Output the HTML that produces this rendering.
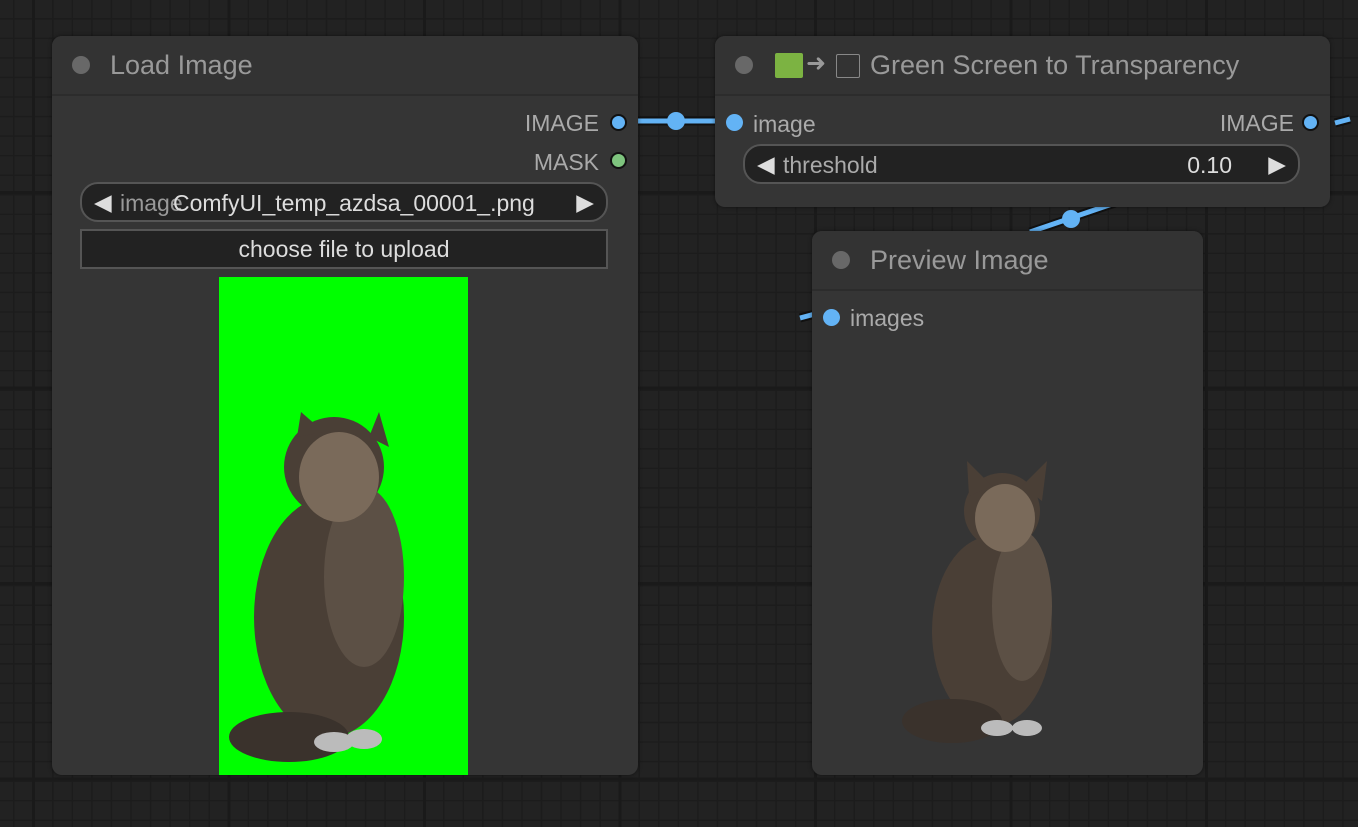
<!DOCTYPE html>
<html><head><style>
body{margin:0;width:1358px;height:827px;overflow:hidden;background:#222;font-family:"Liberation Sans",sans-serif;position:relative}
.grid{position:absolute;inset:0;
background-image:
linear-gradient(90deg,#1a1a1a 3px,transparent 3px),
linear-gradient(0deg,#1a1a1a 3px,transparent 3px),
linear-gradient(90deg,#1c1c1c 1.5px,transparent 1.5px),
linear-gradient(0deg,#1c1c1c 1.5px,transparent 1.5px);
background-size:195.5px 195.5px,195.5px 195.5px,19.55px 19.55px,19.55px 19.55px;
background-position:32px 0,0 194px,13px 0,0 0px}
.node{position:absolute;background:#353535;border-radius:10px;box-shadow:0 0 4px rgba(0,0,0,.5)}
.hd{height:58px;border-bottom:2px solid #2c2c2c;background:#333;border-radius:10px 10px 0 0;position:relative}
.dot{position:absolute;width:18px;height:18px;border-radius:50%;background:#686868;top:20px;left:20px}
.title{position:absolute;left:58px;top:14px;font-size:27px;color:#999}
.t{position:absolute;color:#aaa;font-size:23px}
.sock{position:absolute;width:13px;height:13px;border-radius:50%;background:#63b3f5;border:2px solid #111}
.widget{position:absolute;border:2px solid #555;background:#222;border-radius:18px;color:#ddd;font-size:23px}
</style></head><body>
<div class="grid"></div>
<svg width="1358" height="827" style="position:absolute;left:0;top:0">
<path d="M630 121 L720 121" stroke="#111" stroke-width="9"/>
<path d="M630 121 L720 121" stroke="#63b3f5" stroke-width="5"/>
<circle cx="676" cy="121" r="9" fill="#63b3f5"/>
<path d="M1335 123 L1350 119" stroke="#111" stroke-width="9"/><path d="M1335 123 L1350 119" stroke="#63b3f5" stroke-width="5"/>
<path d="M1030 232 L1115 203" stroke="#111" stroke-width="9"/><path d="M1030 232 L1115 203" stroke="#63b3f5" stroke-width="5"/>
<circle cx="1071" cy="219" r="9" fill="#63b3f5"/>
<path d="M800 318 L815 314" stroke="#111" stroke-width="9"/><path d="M800 318 L815 314" stroke="#63b3f5" stroke-width="5"/>
</svg>

<div class="node" style="left:52px;top:36px;width:586px;height:739px">
<div class="hd"><div class="dot"></div><div class="title">Load Image</div></div>
<div class="t" style="right:39px;top:74px">IMAGE</div><div class="sock" style="left:558px;top:78px"></div>
<div class="t" style="right:39px;top:113px">MASK</div><div class="sock" style="left:558px;top:116px;background:#7ec47e"></div>
<div class="widget" style="left:28px;top:146px;width:524px;height:36px">
<span style="position:absolute;left:12px;top:5px">◀</span><span style="position:absolute;left:38px;top:6px;color:#999">image</span>
<span style="position:absolute;left:91px;top:6px">ComfyUI_temp_azdsa_00001_.png</span><span style="position:absolute;right:12px;top:5px">▶</span></div>
<div style="position:absolute;left:28px;top:193px;width:524px;height:36px;border:2px solid #555;background:#222;color:#ddd;font-size:23px;text-align:center;line-height:36px">choose file to upload</div>
<div style="position:absolute;left:167px;top:241px;width:249px;height:498px;background:#00ff00;overflow:hidden">
<svg width="249" height="498"><g fill="#4a3f36">
<ellipse cx="115" cy="190" rx="50" ry="50"/><ellipse cx="110" cy="340" rx="75" ry="120"/><ellipse cx="145" cy="300" rx="40" ry="90" fill="#5c5045"/>
<polygon points="78,160 82,135 105,155"/><polygon points="150,160 160,135 170,170"/>
<ellipse cx="120" cy="200" rx="40" ry="45" fill="#7a6a5a"/>
<ellipse cx="70" cy="460" rx="60" ry="25" fill="#3a322c"/><ellipse cx="115" cy="465" rx="20" ry="10" fill="#bbb"/><ellipse cx="145" cy="462" rx="18" ry="10" fill="#bbb"/>
</g></svg></div>
</div>

<div class="node" style="left:715px;top:36px;width:615px;height:171px">
<div class="hd"><div class="dot"></div>
<div style="position:absolute;left:60px;top:17px;width:28px;height:25px;background:#7cb342;border-radius:2px"></div>
<div style="position:absolute;left:91px;top:13px;font-size:24px;color:#999">➜</div>
<div style="position:absolute;left:121px;top:18px;width:22px;height:22px;border:1px solid #888;border-radius:2px"></div>
<div class="title" style="left:155px">Green Screen to Transparency</div></div>
<div class="sock" style="left:11px;top:78px;border-color:transparent"></div><div class="t" style="left:38px;top:75px">image</div>
<div class="t" style="right:36px;top:74px">IMAGE</div><div class="sock" style="left:587px;top:78px"></div>
<div class="widget" style="left:28px;top:108px;width:553px;height:36px">
<span style="position:absolute;left:12px;top:5px">◀</span><span style="position:absolute;left:38px;top:6px;color:#aaa">threshold</span>
<span style="position:absolute;right:66px;top:6px">0.10</span><span style="position:absolute;right:12px;top:5px">▶</span></div>
</div>

<div class="node" style="left:812px;top:231px;width:391px;height:544px">
<div class="hd"><div class="dot"></div><div class="title">Preview Image</div></div>
<div class="sock" style="left:11px;top:78px;border-color:transparent"></div><div class="t" style="left:38px;top:74px">images</div>
<svg style="position:absolute;left:85px;top:225px" width="170" height="300"><g fill="#4a3f36">
<ellipse cx="105" cy="55" rx="38" ry="38"/><ellipse cx="95" cy="175" rx="60" ry="95"/><ellipse cx="125" cy="150" rx="30" ry="75" fill="#5c5045"/>
<polygon points="72,40 70,5 95,30"/><polygon points="125,30 150,5 145,45"/>
<ellipse cx="108" cy="62" rx="30" ry="34" fill="#7a6a5a"/>
<ellipse cx="55" cy="265" rx="50" ry="22" fill="#3a322c"/><ellipse cx="100" cy="272" rx="16" ry="8" fill="#bbb"/><ellipse cx="130" cy="272" rx="15" ry="8" fill="#bbb"/>
</g></svg>
</div>
</body></html>
